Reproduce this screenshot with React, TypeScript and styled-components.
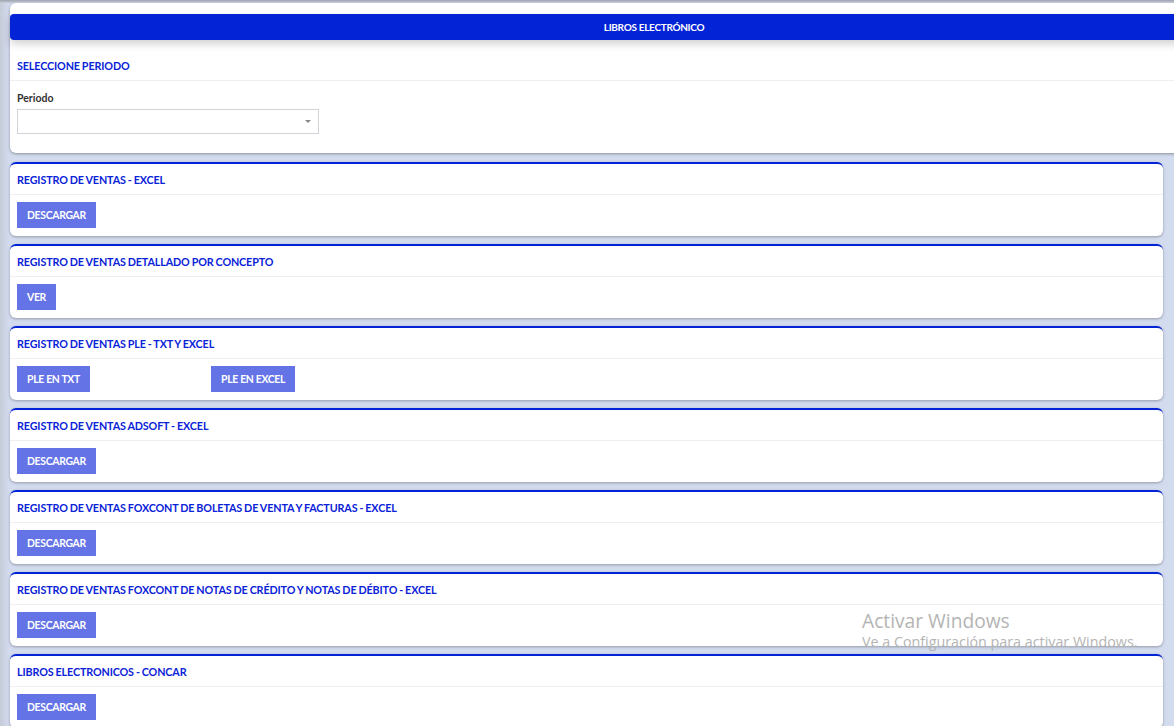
import React from "react";
import styled, { createGlobalStyle } from "styled-components";

const Global = createGlobalStyle`
  html, body { margin: 0; padding: 0; }
  body {
    background: #d3dbef;
    font-family: "Lato", "Noto Sans", sans-serif;
    overflow: hidden;
    width: 1174px;
    height: 726px;
  }
`;

const Page = styled.div`
  position: relative;
  width: 1174px;
  height: 726px;
  overflow: hidden;
  background: linear-gradient(90deg, #c6cbd8 0px, #d3dbef 9px);
  &::before {
    content: "";
    position: absolute;
    left: 0; right: 0; top: 0; height: 3px;
    background: linear-gradient(180deg, #9ea2ad, #c9cfdd);
  }
`;

const Column = styled.div`
  width: 1153px;
  margin-left: 10px;
  padding-top: 3px;
  display: flex;
  flex-direction: column;
  gap: 8px;
`;

const TopCard = styled.div`
  width: 1288px;
  background: #fff;
  border-radius: 6px;
  padding-top: 11px;
  box-shadow: 0 1px 3px rgba(0, 0, 0, 0.35);
  margin-bottom: 1px;
`;

const Banner = styled.div`
  height: 26px;
  background: #0323d6;
  border-radius: 4px 0 0 4px;
  color: #fff;
  font-size: 10px;
  font-weight: 700;
  letter-spacing: -0.3px;
  display: flex;
  align-items: center;
  justify-content: center;
  box-shadow: 0 4px 8px rgba(0, 0, 0, 0.18);
`;

const SectionHead = styled.div<{ $h: number; $pt: number }>`
  height: ${(p) => p.$h}px;
  box-sizing: border-box;
  border-bottom: 1px solid #efefef;
  display: flex;
  align-items: center;
  padding: ${(p) => p.$pt}px 7px 0;
  color: #0a22d8;
  font-size: 10.75px;
  font-weight: 700;
  letter-spacing: -0.12px;
  word-spacing: -0.5px;
`;

const TopBody = styled.div`
  padding: 10px 7px 19px;
  display: flex;
  flex-direction: column;
  gap: 4px;
`;

const Label = styled.div`
  color: #333;
  font-size: 10.5px;
  font-weight: 700;
  height: 14px;
  line-height: 14px;
`;

const Select = styled.div`
  position: relative;
  width: 302px;
  height: 25px;
  box-sizing: border-box;
  border: 1px solid #d2d2d8;
  background: #fff;
`;

const Caret = styled.span`
  position: absolute;
  right: 7px;
  top: 10px;
  width: 0;
  height: 0;
  border-left: 3px solid transparent;
  border-right: 3px solid transparent;
  border-top: 3px solid #888;
`;

const Card = styled.div`
  background: #fff;
  border-radius: 6px;
  border-top: 2px solid #0323d6;
  box-shadow: 0 1px 3px rgba(0, 0, 0, 0.3);
`;

const CardBody = styled.div`
  padding: 7px 7px 8px;
  display: grid;
  grid-template-columns: repeat(auto-fill, 194px);
`;

const Button = styled.button`
  justify-self: start;
  height: 26px;
  padding: 0 10px;
  border: none;
  border-radius: 0;
  background: #6474e6;
  color: #fff;
  font-family: "Lato", "Noto Sans", sans-serif;
  font-size: 10.4px;
  font-weight: 700;
  letter-spacing: -0.3px;
  cursor: pointer;
`;

const Watermark = styled.div`
  position: absolute;
  left: 862px;
  top: 608px;
  color: #b4b4b4;
  font-family: "Open Sans", "Noto Sans", sans-serif;
  pointer-events: none;
`;

const WmTitle = styled.div`
  font-size: 19.2px;
  line-height: 25px;
`;

const WmSub = styled.div`
  font-size: 14.3px;
  line-height: 18px;
`;

const sections: { title: string; buttons: string[] }[] = [
  { title: "REGISTRO DE VENTAS - EXCEL", buttons: ["DESCARGAR"] },
  { title: "REGISTRO DE VENTAS DETALLADO POR CONCEPTO", buttons: ["VER"] },
  { title: "REGISTRO DE VENTAS PLE - TXT Y EXCEL", buttons: ["PLE EN TXT", "PLE EN EXCEL"] },
  { title: "REGISTRO DE VENTAS ADSOFT - EXCEL", buttons: ["DESCARGAR"] },
  { title: "REGISTRO DE VENTAS FOXCONT DE BOLETAS DE VENTA Y FACTURAS - EXCEL", buttons: ["DESCARGAR"] },
  { title: "REGISTRO DE VENTAS FOXCONT DE NOTAS DE CRÉDITO Y NOTAS DE DÉBITO - EXCEL", buttons: ["DESCARGAR"] },
  { title: "LIBROS ELECTRONICOS - CONCAR", buttons: ["DESCARGAR"] },
];

export default function App() {
  return (
    <Page>
      <Global />
      <Column>
        <TopCard>
          <Banner>LIBROS ELECTRÓNICO</Banner>
          <SectionHead $h={41} $pt={10}>SELECCIONE PERIODO</SectionHead>
          <TopBody>
            <Label>Periodo</Label>
            <Select>
              <Caret />
            </Select>
          </TopBody>
        </TopCard>
        {sections.map((s) => (
          <Card key={s.title}>
            <SectionHead $h={31} $pt={0}>{s.title}</SectionHead>
            <CardBody>
              {s.buttons.map((b) => (
                <Button key={b}>{b}</Button>
              ))}
            </CardBody>
          </Card>
        ))}
      </Column>
      <Watermark>
        <WmTitle>Activar Windows</WmTitle>
        <WmSub>Ve a Configuración para activar Windows.</WmSub>
      </Watermark>
    </Page>
  );
}
